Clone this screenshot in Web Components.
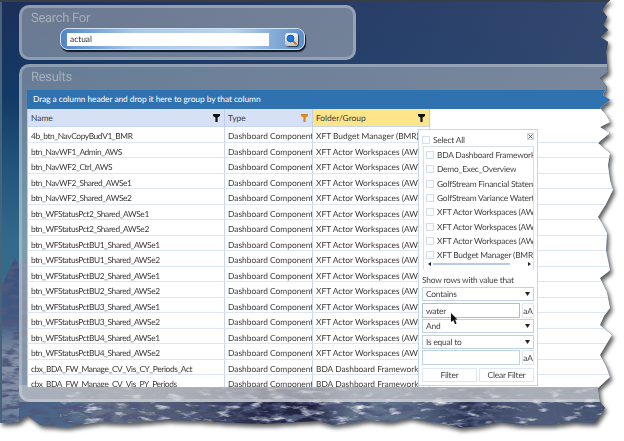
<!DOCTYPE html>
<html>
<head>
<meta charset="utf-8">
<style>
  html, body { margin: 0; padding: 0; background: #fff; }
  body { font-family: Lato, "Liberation Sans", sans-serif; overflow: hidden; text-rendering: geometricPrecision; }
</style>
</head>
<body>
<app-shot>
  <glass-panel heading="Search For" style="width:337px;height:55px">
    <search-box value="actual"></search-box>
  </glass-panel>
  <glass-panel heading="Results" class="results" style="margin-top:4px;height:338px;margin-right:-40px">
    <data-grid>
      <filter-popup></filter-popup>
    </data-grid>
  </glass-panel>
</app-shot>

<script>
// torn edge of the screenshot, clockwise from the top right corner
const TORN = '0 0,610 0,606 4,602 10,607 17,603 25,608 30,600 37,608 42,606 52,607 63,608 72,600 78,607 87,603 95,610 100,600 108,606 115,610 122,600 127,605 130,610 133,598 143,604 148,610 153,608 165,610 180,613 190,606 204,598 217,603 225,607 233,606 250,610 270,608 272,600 278,607 292,610 308,604 316,600 325,612 335,606 345,600 355,606 366,610 377,598 388,600 402,605 408,595 423,573 422,550 425,520 425,500 422,480 426,460 428,445 424,430 422,410 418,390 422,367 420,350 423,333 425,318 421,300 422,265 424,233 423,200 421,167 420,130 423,100 422,85 424,67 427,40 425,27 415,18 422,0 423';

class AppShot extends HTMLElement {
  connectedCallback() {
    const pts = TORN.split(',').map(p => p.split(' ').map(n => n + 'px').join(' ')).join(',');
    this.attachShadow({ mode: 'open' });
    this.shadowRoot.innerHTML = `
      <style>
        :host { display: block; width: 624px; height: 441px; filter: drop-shadow(2px 3px 2px rgba(0,0,0,.65)); }
        .torn {
          position: relative; box-sizing: border-box; width: 624px; height: 441px;
          padding: 5px 0 0 19px; overflow: hidden;
          clip-path: polygon(${pts});
        }
        .bg { position: absolute; left: 0; top: 0; width: 624px; height: 441px; z-index: -1; }
        .content { position: relative; }
      </style>
      <div class="torn">
        <svg class="bg" viewBox="0 0 624 441" xmlns="http://www.w3.org/2000/svg">
          <defs>
            <linearGradient id="sky" x1="0" y1="0" x2="0" y2="1">
              <stop offset="0" stop-color="#1c2f5a"/>
              <stop offset=".22" stop-color="#123a66"/>
              <stop offset=".4" stop-color="#23587e"/>
              <stop offset=".55" stop-color="#33698a"/>
              <stop offset="1" stop-color="#4a7590"/>
            </linearGradient>
            <linearGradient id="sheen" x1="0" y1="0" x2="1" y2="0">
              <stop offset="0" stop-color="#2f4a78" stop-opacity="0"/>
              <stop offset="1" stop-color="#34496f" stop-opacity=".95"/>
            </linearGradient>
            <linearGradient id="rock" x1="0" y1="0" x2="1" y2="0">
              <stop offset="0" stop-color="#46628a"/>
              <stop offset=".1" stop-color="#4c6888"/>
              <stop offset=".16" stop-color="#6b7688"/>
              <stop offset=".3" stop-color="#4c566e"/>
              <stop offset=".42" stop-color="#232746"/>
              <stop offset=".5" stop-color="#20243f"/>
              <stop offset=".57" stop-color="#667790"/>
              <stop offset=".66" stop-color="#5d6d86"/>
              <stop offset=".75" stop-color="#293453"/>
              <stop offset=".85" stop-color="#525f78"/>
              <stop offset="1" stop-color="#3d4d68"/>
            </linearGradient>
            <filter id="grain" x="0" y="0" width="100%" height="100%">
              <feTurbulence type="fractalNoise" baseFrequency=".06 .18" numOctaves="4" seed="7"/>
              <feColorMatrix values="0 0 0 0 .9  0 0 0 0 .92  0 0 0 0 .96  3 0 0 0 -1.7"/>
            </filter>
            <filter id="grainDark" x="0" y="0" width="100%" height="100%">
              <feTurbulence type="fractalNoise" baseFrequency=".07 .2" numOctaves="3" seed="21"/>
              <feColorMatrix values="0 0 0 0 .08  0 0 0 0 .1  0 0 0 0 .2  0 4 0 0 -1.7"/>
            </filter>
            <clipPath id="mtn">
              <path d="M0 290L8 272L15 258L20 268L40 240L624 240V441H0Z"/>
            </clipPath>
            <linearGradient id="slope" x1="0" y1="0" x2="0" y2="1">
              <stop offset="0" stop-color="#36507c"/>
              <stop offset=".35" stop-color="#3f5a82"/>
              <stop offset=".55" stop-color="#8794a8"/>
              <stop offset=".8" stop-color="#7b8ba2"/>
              <stop offset="1" stop-color="#4f6c8c"/>
            </linearGradient>
          </defs>
          <rect width="624" height="441" fill="url(#sky)"/>
          <rect width="624" height="200" fill="url(#sheen)"/>
          <g clip-path="url(#mtn)">
            <rect y="240" width="624" height="201" fill="url(#rock)"/>
            <rect y="255" width="19" height="186" fill="url(#slope)"/>
            <rect y="240" width="624" height="201" filter="url(#grainDark)"/>
            <rect y="385" x="60" width="564" height="56" filter="url(#grain)"/>
            <rect y="385" x="19" width="605" height="17" fill="#a8acb4" fill-opacity=".55"/>
          </g>
          <rect x="0" y="0" width="2" height="441" fill="#48637a"/>
          <rect x="0" y="0" width="624" height="2" fill="#3a3d46"/>
        </svg>
        <div class="content"><slot></slot></div>
      </div>`;
  }
}

class GlassPanel extends HTMLElement {
  connectedCallback() {
    this.attachShadow({ mode: 'open' });
    this.shadowRoot.innerHTML = `
      <style>
        :host {
          display: flex; flex-direction: column; box-sizing: border-box;
          background: rgba(240,240,232,.38);
          border: 3px solid rgba(232,235,240,.3);
          border-radius: 10px;
          padding: 0 0 11px 5px;
        }
        h2 {
          margin: 0; height: 23px; box-sizing: border-box; padding: 1px 0 0 4px; flex: none;
          font: 400 13px/20px Roboto, sans-serif; color: #a4adbb; letter-spacing: -.3px;
        }
        .body { flex: 1; min-height: 0; display: flex; flex-direction: column; }
      </style>
      <h2>${this.getAttribute('heading')}</h2>
      <div class="body"><slot></slot></div>`;
  }
}

class SearchBox extends HTMLElement {
  connectedCallback() {
    this.attachShadow({ mode: 'open' });
    this.shadowRoot.innerHTML = `
      <style>
        :host {
          display: flex; flex: none; align-items: center; box-sizing: border-box;
          width: 245px; height: 22px; margin: -3px 0 0 33px; padding: 0 6px;
          border-radius: 8px;
          background: linear-gradient(90deg, #4f86c6, #a9c8ea 30%, #bcd4ee 70%, #5d8fc8);
          border: 1px solid #cfe0f3;
          box-shadow: 1px 2px 1px #10192c;
        }
        .input {
          width: 202px; height: 13px; background: #fff; color: #333;
          font: 8.4px/13px Lato, sans-serif; padding-left: 3px; box-sizing: border-box;
        }
        .btn {
          margin-left: 16px; width: 13px; height: 13px; border-radius: 3px;
          background: linear-gradient(#f4f2ec, #c9c6bd); box-shadow: 1px 1px 1px #2b3a55;
          display: flex; align-items: center; justify-content: center;
        }
      </style>
      <div class="input">${this.getAttribute('value')}</div>
      <div class="btn">
        <svg width="11" height="11" viewBox="0 0 11 11">
          <path d="M6.5 6.5L9.8 9.8" stroke="#c9752a" stroke-width="2" stroke-linecap="round"/>
          <circle cx="4.5" cy="4.5" r="3.4" fill="#1a78e0" stroke="#0d4fa8" stroke-width=".8"/>
        </svg>
      </div>`;
  }
}

const FUNNEL = c => `<svg width="7" height="8" viewBox="0 0 7 8"><path d="M0 0H7V2L4.6 3.6V8H2.4V3.6L0 2Z" fill="${c}"/></svg>`;

const SHARED = ['Pct2', 'PctBU1', 'PctBU2', 'PctBU3', 'PctBU4'];
const NAMES = [
  '4b_btn_NavCopyBudV1_BMR', 'btn_NavWF1_Admin_AWS', 'btn_NavWF2_Ctrl_AWS',
  'btn_NavWF2_Shared_AWSe1', 'btn_NavWF2_Shared_AWSe2',
  ...SHARED.flatMap(s => [`btn_WFStatus${s}_Shared_AWSe1`, `btn_WFStatus${s}_Shared_AWSe2`]),
  'cbx_BDA_FW_Manage_CV_Vis_CY_Periods_Act', 'cbx_BDA_FW_Manage_CV_Vis_PY_Periods'
];
const folderFor = i => {
  if (i === 0) return 'XFT Budget Manager (BMR)';
  if (i < 3) return 'XFT Actor Workspaces (AWS)';
  if (i < 15) return 'XFT Actor Workspaces (AWSe' + (i % 2 ? '1' : '2') + ')';
  return 'BDA Dashboard Framework';
};

class DataGrid extends HTMLElement {
  connectedCallback() {
    const rows = NAMES.map((n, i) => `
      <div class="row">
        <div class="cell name">${n}</div>
        <div class="cell">Dashboard Component</div>
        <div class="cell">${folderFor(i)}</div>
        <div></div>
      </div>`).join('');
    this.attachShadow({ mode: 'open' });
    this.shadowRoot.innerHTML = `
      <style>
        :host {
          display: block; position: relative; flex: 1; min-height: 0; overflow: hidden;
          background: #fff; color: #3a3a3a;
          font: 8.4px/15px Lato, sans-serif;
          border-bottom: 1px solid #9db7dc;
        }
        .band { height: 19px; background: #3071b0; color: #fff; line-height: 19px; padding-left: 6px; letter-spacing: -.06px; }
        .row, .head { display: grid; grid-template-columns: 197px 88px 117px 1fr; }
        .head { height: 18px; background: #fff; border-left: 1px solid #b9cbe6; }
        .head > div {
          display: flex; align-items: center; justify-content: space-between;
          padding: 1px 4px 0 3px; background: #d6e1f6; border-right: 1px solid #c0d0ea; border-bottom: 1px solid #c7d6ee;
        }
        .head > .on { background: #ffe58a; }
        .head > .rest { background: #fff; border: 0; }
        .row { height: 15.5px; box-sizing: border-box; border-bottom: 1.5px solid #dbe5f5; border-left: 1px solid #b9cbe6; }
        .cell { padding-left: 3px; border-right: 1px solid #c8d7ee; white-space: nowrap; overflow: hidden; line-height: 18px; }
        .name { letter-spacing: -.4px; }
      </style>
      <div class="band">Drag a column header and drop it here to group by that column</div>
      <div class="head">
        <div>Name ${FUNNEL('#111')}</div>
        <div>Type ${FUNNEL('#d98a1c')}</div>
        <div class="on">Folder/Group ${FUNNEL('#111')}</div>
        <div class="rest"></div>
      </div>
      ${rows}
      <slot></slot>`;
  }
}

class FilterPopup extends HTMLElement {
  connectedCallback() {
    const items = ['BDA Dashboard Framework', 'Demo_Exec_Overview', 'GolfStream Financial Statements',
      'GolfStream Variance Waterfall', 'XFT Actor Workspaces (AWS)', 'XFT Actor Workspaces (AWSe1)',
      'XFT Actor Workspaces (AWSe2)', 'XFT Budget Manager (BMR)']
      .map(t => `<div class="item"><i class="box"></i><span>${t}</span></div>`).join('');
    const caret = `<svg width="5" height="4" viewBox="0 0 5 4"><path d="M0 0H5L2.5 4Z" fill="#222"/></svg>`;
    this.attachShadow({ mode: 'open' });
    this.shadowRoot.innerHTML = `
      <style>
        :host {
          position: absolute; left: 391px; top: 39px; width: 120px; height: 257px; box-sizing: border-box;
          display: flex; flex-direction: column; padding: 3px 3px 0 3px;
          background: #fff; border: 1px solid #c5d6ee; color: #444;
          font: 8.4px/12px Lato, sans-serif; letter-spacing: -.2px;
        }
        .box { display: block; flex: none; width: 8px; height: 8px; box-sizing: border-box; border: 1px solid #d3deef; background: #fbfcfe; }
        .all { display: flex; align-items: center; gap: 3px; height: 12px; margin: 1px 0 0; position: relative; }
        .close {
          position: absolute; right: 0; top: -1px; width: 7px; height: 7px; box-sizing: border-box;
          border: 1px solid #c5d6ee; background: #eef3fb; display: flex; align-items: center; justify-content: center;
        }
        .list {
          margin: 0 0 0 1px; height: 124px; box-sizing: border-box; border: 1px solid #d5e0f1; border-bottom: 0;
          padding: 1px 0 0 2px; overflow: hidden; display: flex; flex-direction: column;
        }
        .item { display: flex; align-items: center; gap: 3px; height: 14.3px; flex: none; white-space: nowrap; }
        .item span { overflow: hidden; }
        .scroll { display: flex; align-items: center; justify-content: space-between; height: 6px; margin: -1px 2px 0; flex: none; }
        .thumb { flex: 1; height: 2px; margin: 0 2px 0 2px; background: #b6cbec; }
        .label { margin: 4px 0 1px; height: 12px; }
        .ctl {
          box-sizing: border-box; height: 14px; padding: 0 3px; border: 1px solid #c0d1ea;
          display: flex; align-items: center; justify-content: space-between; flex: none;
        }
        .line { display: flex; gap: 2px; margin: 1px 0; height: 15px; flex: none; }
        .line.first { margin-top: 2px; }
        .line .ctl { flex: 1; height: 15px; }
        .line .water { border-color: #a8bfe2; }
        .aa { flex: none !important; width: 12px; padding: 0; justify-content: center; border-color: #dfe7f4 !important; }
        .btns { display: flex; gap: 2px; margin-top: 2px; }
        .btns div { flex: 1; height: 14px; border: 1px solid #dfe7f4; box-sizing: border-box; text-align: center; line-height: 12px; }
        .cursor { position: absolute; left: 32px; top: 183px; }
      </style>
      <div class="all"><i class="box"></i><span>Select All</span>
        <div class="close"><svg width="5" height="5" viewBox="0 0 5 5"><path d="M.5.5L4.5 4.5M4.5.5L.5 4.5" stroke="#555" stroke-width=".9"/></svg></div>
      </div>
      <div class="list">${items}
        <div class="scroll">
          <svg width="3" height="4" viewBox="0 0 3 4"><path d="M3 0V4L0 2Z" fill="#222"/></svg>
          <div class="thumb"></div>
          <svg width="3" height="4" viewBox="0 0 3 4" style="margin-left:16px"><path d="M0 0V4L3 2Z" fill="#222"/></svg>
        </div>
      </div>
      <div class="label">Show rows with value that</div>
      <div class="ctl">Contains ${caret}</div>
      <div class="line first"><div class="ctl water">water</div><div class="ctl aa">aA</div></div>
      <div class="ctl">And ${caret}</div>
      <div class="ctl" style="margin-top:2px">Is equal to ${caret}</div>
      <div class="line"><div class="ctl"></div><div class="ctl aa">aA</div></div>
      <div class="btns"><div>Filter</div><div>Clear Filter</div></div>
      <svg class="cursor" width="7" height="12" viewBox="0 0 7 12"><path d="M0 0L6.5 6.5H4L5.6 10.5L4 11.2L2.4 7.2L0 9Z" fill="#111"/></svg>`;
  }
}

customElements.define('glass-panel', GlassPanel);
customElements.define('search-box', SearchBox);
customElements.define('data-grid', DataGrid);
customElements.define('filter-popup', FilterPopup);
customElements.define('app-shot', AppShot);
</script>
</body>
</html>
